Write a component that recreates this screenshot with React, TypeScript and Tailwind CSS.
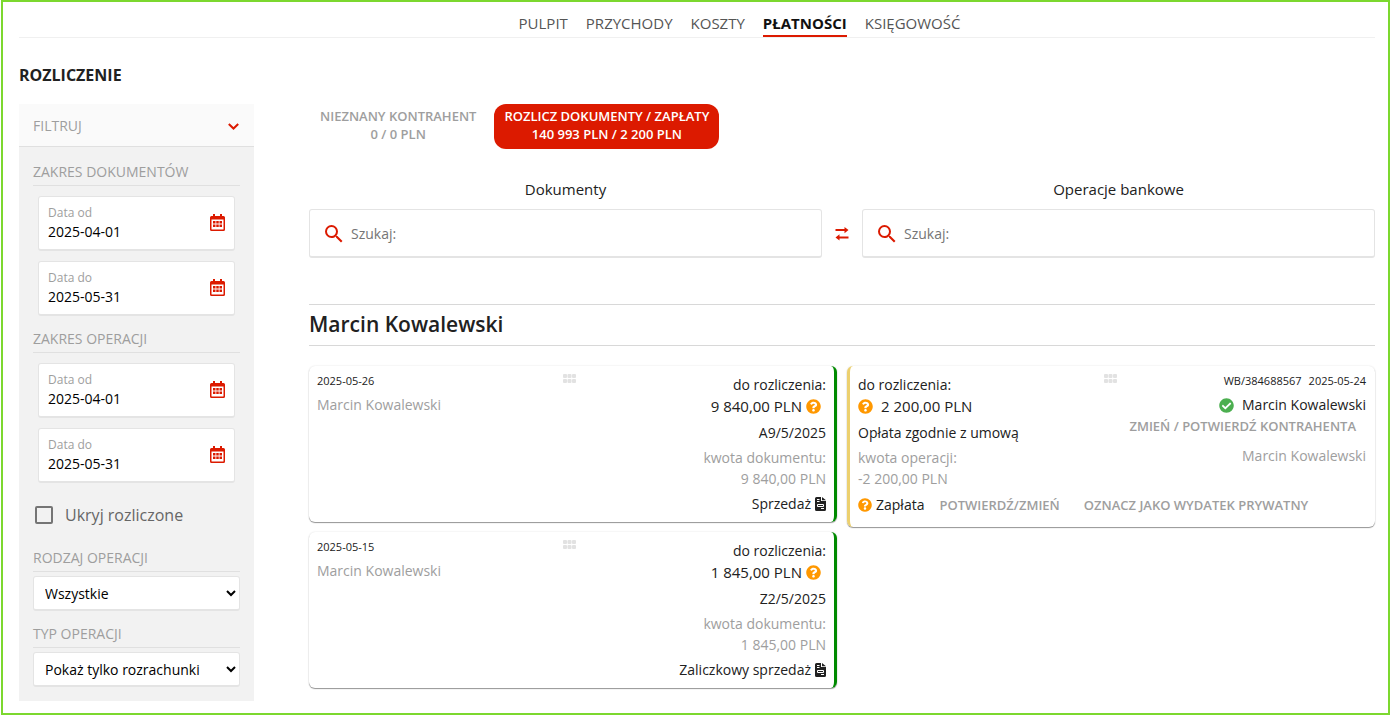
import React, { useState } from 'react';
import { FaCheckCircle, FaQuestionCircle } from 'react-icons/fa';
import { MdSearch } from 'react-icons/md';

interface DocumentItem {
  id: string;
  date: string;
  contractor: string;
  amount: string;
  kind: string;
}

const navItems = ['PULPIT', 'PRZYCHODY', 'KOSZTY', 'PŁATNOŚCI', 'KSIĘGOWOŚĆ'];

const documents: DocumentItem[] = [
  { id: 'A9/5/2025', date: '2025-05-26', contractor: 'Marcin Kowalewski', amount: '9 840,00 PLN', kind: 'Sprzedaż' },
  { id: 'Z2/5/2025', date: '2025-05-15', contractor: 'Marcin Kowalewski', amount: '1 845,00 PLN', kind: 'Zaliczkowy sprzedaż' },
];

const CalendarIcon = () => (
  <svg className="h-[17px] w-[15px]" viewBox="0 0 15 17" aria-hidden="true">
    <path
      fill="#dc1a00"
      fillRule="evenodd"
      d="M3 0h2v2h5V0h2v2h1.5A1.5 1.5 0 0115 3.500v12a1.500 1.500 0 01-1.500 1.500h-12A1.500 1.500 0 010 15.500v-12A1.500 1.500 0 011.500 2H3zM1.500 5.500v9.500q0 .5.5.5h11q.5 0 .5-.5V5.500z"
    />
    <path fill="#dc1a00" d="M3 7h2.500v2.500H3zM6.250 7h2.500v2.500h-2.500zM9.500 7H12v2.500H9.500zM3 10.500h2.500V13H3zM6.250 10.500h2.500V13h-2.500zM9.500 10.500H12V13H9.500z" />
  </svg>
);

const GripIcon = () => (
  <svg className="mr-1 h-[9px] w-[13px]" viewBox="0 0 13 9" fill="#e2e2e2" aria-hidden="true">
    <rect x="0" y="0" width="4" height="4" rx="1" />
    <rect x="4.500" y="0" width="4" height="4" rx="1" />
    <rect x="9" y="0" width="4" height="4" rx="1" />
    <rect x="0" y="5" width="4" height="4" rx="1" />
    <rect x="4.500" y="5" width="4" height="4" rx="1" />
    <rect x="9" y="5" width="4" height="4" rx="1" />
  </svg>
);

const SwapIcon = () => (
  <svg className="h-[14px] w-[14px]" viewBox="0 0 14 14" fill="#dc1a00" aria-hidden="true">
    <path d="M.5 2h9V0l4 3-4 3.200V4h-9zM13.500 11.500h-9V13.500L.5 10.500l4-3.200V9.500h9z" />
  </svg>
);

const InvoiceIcon = () => (
  <svg className="h-[14px] w-[11px]" viewBox="0 0 11 14" aria-hidden="true">
    <path fill="#212121" d="M1.500 0H6v4h5v8.500a1.500 1.500 0 01-1.500 1.500h-8A1.500 1.500 0 010 12.500v-11A1.500 1.500 0 011.500 0zM7 0l4 3.200H7z" />
    <path fill="none" stroke="#fff" strokeWidth="1" d="M2 2.500h2.500M2 4.500h2.500M2.500 7.500h6v2h-6zM6 11.500h3" />
  </svg>
);

const Chevron = () => (
  <svg className="h-[7px] w-[11px]" viewBox="0 0 11 7" fill="none" stroke="#dc1a00" strokeWidth="2" aria-hidden="true">
    <path d="M.8 1l4.700 4.500L10.200 1" />
  </svg>
);

const SectionTitle: React.FC<{ children: React.ReactNode }> = ({ children }) => (
  <h3 className="mt-[13px] h-6 border-b border-[#e0e0e0] text-sm leading-5 text-[#9e9e9e]">{children}</h3>
);

const DateField: React.FC<{ id: string; label: string; initial: string }> = ({ id, label, initial }) => {
  const [value, setValue] = useState(initial);

  return (
    <div className="mx-[5px] mt-[10px] flex h-[55px] items-center rounded-[3px] border border-b-2 border-[#e4e4e4] bg-white pr-[9px] pl-[9px]">
      <div className="min-w-0 flex-1">
        <label htmlFor={id} className="block text-xs leading-[18px] text-[#9e9e9e]">{label}</label>
        <input
          id={id}
          value={value}
          onChange={(e) => setValue(e.target.value)}
          className="block w-full text-sm leading-5 text-black outline-none"
        />
      </div>
      <button type="button" aria-label="Kalendarz" className="pb-0.5"><CalendarIcon /></button>
    </div>
  );
};

const SelectField: React.FC<{ label: string; options: string[] }> = ({ label, options }) => (
  <select
    aria-label={label}
    className="mt-1 block h-[35px] w-full rounded-[3px] border border-b-2 border-[#e4e4e4] bg-white pl-[7px] text-sm text-black"
  >
    {options.map((o) => <option key={o}>{o}</option>)}
  </select>
);

const SearchField: React.FC<{ title: string; id: string }> = ({ title, id }) => (
  <div className="flex-1">
    <label htmlFor={id} className="block text-center text-[15px] leading-5">{title}</label>
    <div className="mt-[10px] flex h-[49px] items-center gap-[5px] rounded-[3px] border border-b-2 border-[#e4e4e4] px-3 pt-0.5">
      <MdSearch className="h-6 w-6 text-[#dc1a00]" />
      <input
        id={id}
        placeholder="Szukaj:"
        className="min-w-0 flex-1 text-sm outline-none placeholder:text-[#757575]"
      />
    </div>
  </div>
);

const cardShadow = 'shadow-[0_1px_1px_rgba(0,0,0,0.4),0_0_2px_rgba(0,0,0,0.12)]';

const DocumentCard: React.FC<{ item: DocumentItem }> = ({ item }) => (
  <article className={`grid grid-cols-[1fr_auto_1fr] rounded-md border-r-[3px] border-[#008a00] px-2 pt-2 pb-[7px] ${cardShadow}`}>
    <div>
      <p className="text-[11px] leading-[14px]">{item.date}</p>
      <p className="mt-[7px] text-sm leading-5 text-[#9e9e9e]">{item.contractor}</p>
    </div>
    <GripIcon />
    <div className="text-right text-sm leading-[22px]">
      <p>do rozliczenia:</p>
      <p className="flex items-center justify-end gap-1 pr-[5px] text-[15px] leading-5">
        {item.amount}
        <FaQuestionCircle className="h-[15px] w-[15px] text-[#ff9800]" />
      </p>
      <p className="mt-[6px]">{item.id}</p>
      <p className="mt-[3px] text-[#9e9e9e]">kwota dokumentu:</p>
      <p className="leading-5 text-[#9e9e9e]">{item.amount}</p>
      <p className="mt-1 flex items-center justify-end gap-1">
        {item.kind}
        <InvoiceIcon />
      </p>
    </div>
  </article>
);

const actionClass = 'text-[13px] leading-[18px] font-semibold text-[#9e9e9e]';

const OperationCard = () => (
  <article className={`rounded-md border-l-[3px] border-[#ecd06f] pt-2 pr-[9px] pb-[7px] pl-2 ${cardShadow}`}>
    <div className="grid grid-cols-[1fr_auto_1fr]">
      <div className="text-sm leading-[22px]">
        <p>do rozliczenia:</p>
        <p className="flex items-center gap-2 text-[15px] leading-5">
          <FaQuestionCircle className="h-[15px] w-[15px] text-[#ff9800]" />
          2 200,00 PLN
        </p>
        <p className="mt-[6px]">Opłata zgodnie z umową</p>
        <p className="mt-[3px] text-[#9e9e9e]">kwota operacji:</p>
        <p className="leading-5 text-[#9e9e9e]">-2 200,00 PLN</p>
      </div>
      <GripIcon />
      <div className="text-right text-sm leading-5">
        <p className="text-[11px] leading-[14px]">
          WB/384688567<span className="ml-[7px]">2025-05-24</span>
        </p>
        <p className="mt-[7px] flex items-center justify-end gap-2">
          <FaCheckCircle className="h-[15px] w-[15px] text-[#4caf50]" />
          Marcin Kowalewski
        </p>
        <button type="button" className={`mt-0.5 mr-[10px] ml-auto block ${actionClass}`}>
          ZMIEŃ / POTWIERDŹ KONTRAHENTA
        </button>
        <p className="mt-[11px] text-[#9e9e9e]">Marcin Kowalewski</p>
      </div>
    </div>
    <div className="mt-[5px] flex items-center pb-1 text-sm leading-[22px]">
      <FaQuestionCircle className="mr-1 h-[14px] w-[14px] text-[#ff9800]" />
      Zapłata
      <button type="button" className={`ml-[15px] ${actionClass}`}>POTWIERDŹ/ZMIEŃ</button>
      <button type="button" className={`ml-6 ${actionClass}`}>OZNACZ JAKO WYDATEK PRYWATNY</button>
    </div>
  </article>
);

const Filters = () => (
  <aside className="w-[235px] shrink-0 bg-[#f2f2f2] pb-[14px] text-[#9e9e9e]">
    <button type="button" className="flex h-[43px] w-full items-center justify-between border-b border-[#e0e0e0] bg-[#fafafa] pt-0.5 pr-[15px] pl-[14px] text-sm">
      FILTRUJ
      <Chevron />
    </button>
    <div className="px-[14px] pt-0.5">
      <SectionTitle>ZAKRES DOKUMENTÓW</SectionTitle>
      <DateField id="doc-from" label="Data od" initial="2025-04-01" />
      <DateField id="doc-to" label="Data do" initial="2025-05-31" />
      <SectionTitle>ZAKRES OPERACJI</SectionTitle>
      <DateField id="op-from" label="Data od" initial="2025-04-01" />
      <DateField id="op-to" label="Data do" initial="2025-05-31" />
      <label className="mt-3 ml-0.5 flex h-10 items-center gap-3 text-base text-[#666]">
        <input type="checkbox" className="h-[18px] w-[18px] appearance-none rounded-[2px] border-2 border-[#757575] checked:bg-[#dc1a00]" />
        Ukryj rozliczone
      </label>
      <SectionTitle>RODZAJ OPERACJI</SectionTitle>
      <SelectField label="Rodzaj operacji" options={['Wszystkie', 'Wpływy', 'Wydatki']} />
      <SectionTitle>TYP OPERACJI</SectionTitle>
      <SelectField label="Typ operacji" options={['Pokaż tylko rozrachunki', 'Wszystkie']} />
    </div>
  </aside>
);

const App: React.FC = () => {
  return (
    <div className="mr-[3px] ml-px border-2 border-[#7cd82f] bg-white pr-[13px] pb-3 pl-4 font-['Open_Sans',sans-serif] text-[#212121]">
      <nav className="flex h-9 justify-center gap-[18px] border-b border-[#f0f0f0] pl-[85px] text-[15px] text-[#555]">
        {navItems.map((item) => (
          <a
            key={item}
            href="#"
            className={item === 'PŁATNOŚCI'
              ? 'h-[35px] border-b-2 border-[#dc1a00] pt-[11px] leading-5 font-bold text-[#111]'
              : 'pt-[11px] leading-5'}
          >
            {item}
          </a>
        ))}
      </nav>
      <h1 className="mt-[27px] text-base leading-5 font-bold">ROZLICZENIE</h1>

      <div className="mt-[19px] flex items-start gap-[55px]">
        <Filters />
        <main className="min-w-0 flex-1">
          <div className="flex gap-[7px] text-[13px] leading-[18px] font-semibold">
            <button type="button" className="h-[45px] px-[11px] pb-1 text-[#9e9e9e]">
              NIEZNANY KONTRAHENT<br />0 / 0 PLN
            </button>
            <button type="button" className="h-[45px] rounded-xl bg-[#dc1a00] px-[10px] pb-1 text-white">
              ROZLICZ DOKUMENTY / ZAPŁATY<br />140 993 PLN / 2 200 PLN
            </button>
          </div>

          <div className="mt-[30px] flex items-end">
            <SearchField title="Dokumenty" id="search-documents" />
            <button type="button" aria-label="Zamień" className="flex h-[49px] w-10 items-center justify-center">
              <SwapIcon />
            </button>
            <SearchField title="Operacje bankowe" id="search-operations" />
          </div>

          <h2 className="mt-[46px] border-y border-[#d8d8d8] pb-0.5 text-[21px] leading-[38px] font-semibold">Marcin Kowalewski</h2>

          <div className="mt-5 grid grid-cols-2 items-start gap-[10px]">
            <div className="flex flex-col gap-[10px]">
              {documents.map((item) => <DocumentCard key={item.id} item={item} />)}
            </div>
            <OperationCard />
          </div>
        </main>
      </div>
    </div>
  );
};

export default App;
